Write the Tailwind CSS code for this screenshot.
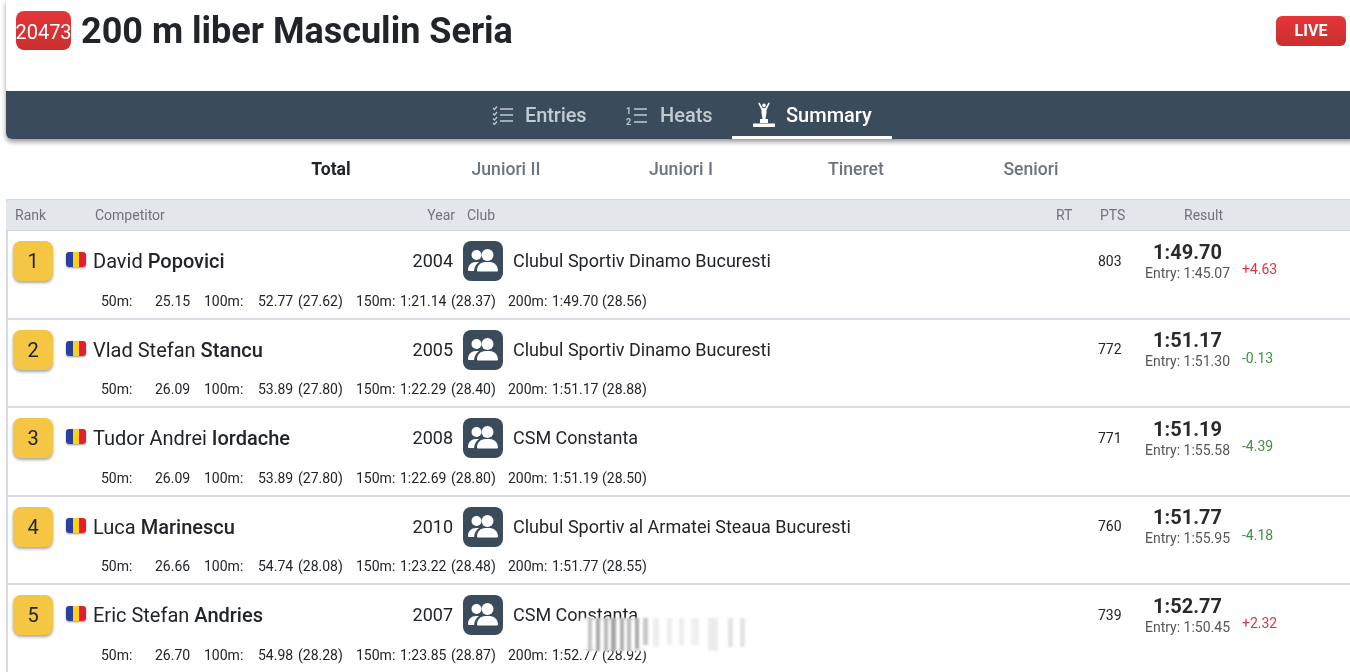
<!DOCTYPE html>
<html lang="ro">
<head>
<meta charset="utf-8">
<title>200 m liber Masculin Seria</title>
<script src="https://cdn.jsdelivr.net/npm/@tailwindcss/browser@4"></script>
</head>
<body class="bg-white overflow-hidden h-[672px] font-['Roboto',sans-serif] text-[#212529]">
<div class="relative w-[1350px] ml-[6px] h-[672px]">
  <!-- event card -->
  <header class="h-[139px] rounded-b-md shadow-[0_3px_5px_rgba(0,0,0,0.4),0_0_1px_rgba(0,0,0,0.12)] flex flex-col">
    <div class="h-[91px] flex items-start justify-between pl-[10px] pr-[10px]">
      <div class="flex items-start mt-[11px]">
        <span class="w-[55px] h-[39px] pt-[1px] rounded-lg bg-linear-to-b from-[#e53538] to-[#c9302f] text-white text-[20px] leading-[41px] flex justify-center whitespace-nowrap">20473</span>
        <h1 class="ml-[10px] text-[36px] leading-[41px] font-bold text-[#212529] whitespace-nowrap">200 m liber Masculin Seria</h1>
      </div>
      <span class="mt-[16px] w-[70px] h-[30px] rounded-md bg-linear-to-b from-[#e53538] to-[#c9302f] text-white text-[16px] font-bold flex items-center justify-center">LIVE</span>
    </div>
    <nav class="h-[48px] bg-[#3a4b5c] rounded-b-md flex justify-center pl-[2px] text-[20px] font-medium">
      <a class="w-[134px] flex items-center gap-[11px] pl-5 text-[#c3cad1] whitespace-nowrap tracking-[-0.1px]">
        <svg class="w-[22px] h-[20px]" viewBox="0 0 22 20" fill="none" stroke="currentColor"><path d="M1 3l1.5 1.5L5 1.5M1 8.5l1.5 1.5L5 7M1 13.5L2.5 15 5 12M1 18l1.5 1.5L5 16.5" stroke-width="1.2"/><path d="M8 4h13M8 10h13M8 16h13" stroke-width="1.4"/></svg>
        Entries
      </a>
      <a class="w-[126px] flex items-center gap-[12px] pl-5 text-[#c3cad1] whitespace-nowrap">
        <svg class="w-[22px] h-[20px]" viewBox="0 0 22 20" fill="none"><text x="0" y="9" font-size="9" font-weight="700" fill="currentColor" font-family="Roboto">1</text><text x="0" y="19.5" font-size="9" font-weight="700" fill="currentColor" font-family="Roboto">2</text><path d="M8 4h13M8 10h13M8 17h13" stroke="currentColor" stroke-width="1.4"/></svg>
        Heats
      </a>
      <a class="w-[160px] flex items-center gap-[10px] pl-5 text-white border-b-[3px] border-white pt-[3px] whitespace-nowrap">
        <svg class="w-[24px] h-[26px]" viewBox="0 0 24 26" fill="#fff"><path d="M6.2 1.2l1.3-.6L10.6 6h2.8l3.1-5.4 1.3.6L14.5 8v3l-1 6h-3l-1-6V8z"/><circle cx="12" cy="3.4" r="1.8"/><rect x="8" y="17" width="8" height="4"/><rect x="1" y="21.5" width="22" height="3.5"/></svg>
        Summary
      </a>
    </nav>
  </header>

  <!-- age groups -->
  <div class="h-[60px] pl-[237.5px] flex items-center text-[17.6px] font-medium text-[#6c757d]">
    <span class="w-[175px] text-center font-bold text-[#212529]">Total</span>
    <span class="w-[175px] text-center">Juniori II</span>
    <span class="w-[175px] text-center">Juniori I</span>
    <span class="w-[175px] text-center">Tineret</span>
    <span class="w-[175px] text-center">Seniori</span>
  </div>

  <!-- results -->
  <div class="border-l-2 border-[#d9dce3]">
    <div class="h-[32px] -ml-[2px] pl-[2px] rounded-tl bg-[#e3e6eb] border-y border-[#d2d5da] flex items-center text-[14px] text-[#6c757d]">
      <span class="w-[87px] pl-[7px]">Rank</span>
      <span class="w-[320px]">Competitor</span>
      <span class="w-[40px] text-right mr-[12px]">Year</span>
      <span class="w-[589px]">Club</span>
      <span class="w-[44px]">RT</span>
      <span class="w-[84px]">PTS</span>
      <span>Result</span>
    </div>

    <div class="h-[88.5px] pt-[10px] border-b-2 border-[#d9dce3]">
      <div class="flex h-[40px] items-center">
        <span class="ml-[5px] w-[40px] h-[40px] rounded-lg bg-[#f4c644] shadow-[0_2px_3px_rgba(0,0,0,0.35)] flex items-center justify-center text-[20px]">1</span>
        <span class="ml-[13px] -mt-[3px] w-[20px] h-[15px] rounded-[3px] bg-[linear-gradient(90deg,#2b3f9e_33%,#fcd116_33%,#fcd116_66%,#e0202e_66%)] shadow-[0_1px_2px_rgba(0,0,0,0.4)] block"></span>
        <span class="ml-[7px] w-[304px] text-[20px] whitespace-nowrap">David <b class="font-medium">Popovici</b></span>
        <span class="w-[56px] -mt-[1px] text-right text-[18px]">2004</span>
        <span class="ml-[10px] w-[40px] h-[40px] rounded-lg bg-[#3a4b5c] flex items-center justify-center"><svg class="w-[30px] h-[24px]" viewBox="0 0 30 24" fill="#fff"><circle cx="8.5" cy="6" r="5"/><circle cx="19.5" cy="6" r="6"/><path d="M0 21c0-5 3.500-8 8-8h3c-3 2-4.500 5-5 9H1a1 1 0 0 1-1-1zM9 21.500c0-5 4-8.500 8-8.500h5c4 0 8 3.500 8 8.500q0 1-1 1H10q-1 0-1-1z"/></svg></span>
        <span class="ml-[10px] -mt-[1px] w-[585px] text-[18px] whitespace-nowrap">Clubul Sportiv Dinamo Bucuresti</span>
        <span class="w-[46px] text-[14px]">803</span>
        <div class="w-[87px] -mt-[1px] text-center leading-none"><div class="text-[20px] font-bold text-[#2a2a2a]">1:49.70</div><div class="mt-[4px] text-[14px] text-[#555]">Entry: 1:45.07</div></div>
        <span class="ml-[11px] mt-[17px] text-[14px] text-[#dc3545]">+4.63</span>
      </div>
      <div class="mt-[10px] h-[20px] pl-[93px] flex items-center text-[14px] whitespace-pre">
        <span class="w-[54px]">50m:</span><span class="w-[35px]">25.15</span>
        <span class="ml-[14px] w-[54px]">100m:</span><span class="w-[40px]">52.77</span><span class="w-[58px]">(27.62)</span>
        <span class="w-[44px]">150m:</span><span class="w-[51px]">1:21.14</span><span class="w-[57px]">(28.37)</span>
        <span class="w-[44px]">200m:</span><span class="w-[50px]">1:49.70</span><span>(28.56)</span>
      </div>
    </div>

    <div class="h-[88.5px] pt-[10px] border-b-2 border-[#d9dce3]">
      <div class="flex h-[40px] items-center">
        <span class="ml-[5px] w-[40px] h-[40px] rounded-lg bg-[#f4c644] shadow-[0_2px_3px_rgba(0,0,0,0.35)] flex items-center justify-center text-[20px]">2</span>
        <span class="ml-[13px] -mt-[3px] w-[20px] h-[15px] rounded-[3px] bg-[linear-gradient(90deg,#2b3f9e_33%,#fcd116_33%,#fcd116_66%,#e0202e_66%)] shadow-[0_1px_2px_rgba(0,0,0,0.4)] block"></span>
        <span class="ml-[7px] w-[304px] text-[20px] whitespace-nowrap">Vlad Stefan <b class="font-medium">Stancu</b></span>
        <span class="w-[56px] -mt-[1px] text-right text-[18px]">2005</span>
        <span class="ml-[10px] w-[40px] h-[40px] rounded-lg bg-[#3a4b5c] flex items-center justify-center"><svg class="w-[30px] h-[24px]" viewBox="0 0 30 24" fill="#fff"><circle cx="8.5" cy="6" r="5"/><circle cx="19.5" cy="6" r="6"/><path d="M0 21c0-5 3.500-8 8-8h3c-3 2-4.500 5-5 9H1a1 1 0 0 1-1-1zM9 21.500c0-5 4-8.500 8-8.500h5c4 0 8 3.500 8 8.500q0 1-1 1H10q-1 0-1-1z"/></svg></span>
        <span class="ml-[10px] -mt-[1px] w-[585px] text-[18px] whitespace-nowrap">Clubul Sportiv Dinamo Bucuresti</span>
        <span class="w-[46px] text-[14px]">772</span>
        <div class="w-[87px] -mt-[1px] text-center leading-none"><div class="text-[20px] font-bold text-[#2a2a2a]">1:51.17</div><div class="mt-[4px] text-[14px] text-[#555]">Entry: 1:51.30</div></div>
        <span class="ml-[11px] mt-[17px] text-[14px] text-[#3f9142]">-0.13</span>
      </div>
      <div class="mt-[10px] h-[20px] pl-[93px] flex items-center text-[14px] whitespace-pre">
        <span class="w-[54px]">50m:</span><span class="w-[35px]">26.09</span>
        <span class="ml-[14px] w-[54px]">100m:</span><span class="w-[40px]">53.89</span><span class="w-[58px]">(27.80)</span>
        <span class="w-[44px]">150m:</span><span class="w-[51px]">1:22.29</span><span class="w-[57px]">(28.40)</span>
        <span class="w-[44px]">200m:</span><span class="w-[50px]">1:51.17</span><span>(28.88)</span>
      </div>
    </div>

    <div class="h-[88.5px] pt-[10px] border-b-2 border-[#d9dce3]">
      <div class="flex h-[40px] items-center">
        <span class="ml-[5px] w-[40px] h-[40px] rounded-lg bg-[#f4c644] shadow-[0_2px_3px_rgba(0,0,0,0.35)] flex items-center justify-center text-[20px]">3</span>
        <span class="ml-[13px] -mt-[3px] w-[20px] h-[15px] rounded-[3px] bg-[linear-gradient(90deg,#2b3f9e_33%,#fcd116_33%,#fcd116_66%,#e0202e_66%)] shadow-[0_1px_2px_rgba(0,0,0,0.4)] block"></span>
        <span class="ml-[7px] w-[304px] text-[20px] whitespace-nowrap">Tudor Andrei <b class="font-medium">Iordache</b></span>
        <span class="w-[56px] -mt-[1px] text-right text-[18px]">2008</span>
        <span class="ml-[10px] w-[40px] h-[40px] rounded-lg bg-[#3a4b5c] flex items-center justify-center"><svg class="w-[30px] h-[24px]" viewBox="0 0 30 24" fill="#fff"><circle cx="8.5" cy="6" r="5"/><circle cx="19.5" cy="6" r="6"/><path d="M0 21c0-5 3.500-8 8-8h3c-3 2-4.500 5-5 9H1a1 1 0 0 1-1-1zM9 21.500c0-5 4-8.500 8-8.500h5c4 0 8 3.500 8 8.500q0 1-1 1H10q-1 0-1-1z"/></svg></span>
        <span class="ml-[10px] -mt-[1px] w-[585px] text-[18px] whitespace-nowrap">CSM Constanta</span>
        <span class="w-[46px] text-[14px]">771</span>
        <div class="w-[87px] -mt-[1px] text-center leading-none"><div class="text-[20px] font-bold text-[#2a2a2a]">1:51.19</div><div class="mt-[4px] text-[14px] text-[#555]">Entry: 1:55.58</div></div>
        <span class="ml-[11px] mt-[17px] text-[14px] text-[#3f9142]">-4.39</span>
      </div>
      <div class="mt-[10px] h-[20px] pl-[93px] flex items-center text-[14px] whitespace-pre">
        <span class="w-[54px]">50m:</span><span class="w-[35px]">26.09</span>
        <span class="ml-[14px] w-[54px]">100m:</span><span class="w-[40px]">53.89</span><span class="w-[58px]">(27.80)</span>
        <span class="w-[44px]">150m:</span><span class="w-[51px]">1:22.69</span><span class="w-[57px]">(28.80)</span>
        <span class="w-[44px]">200m:</span><span class="w-[50px]">1:51.19</span><span>(28.50)</span>
      </div>
    </div>

    <div class="h-[88.5px] pt-[10px] border-b-2 border-[#d9dce3]">
      <div class="flex h-[40px] items-center">
        <span class="ml-[5px] w-[40px] h-[40px] rounded-lg bg-[#f4c644] shadow-[0_2px_3px_rgba(0,0,0,0.35)] flex items-center justify-center text-[20px]">4</span>
        <span class="ml-[13px] -mt-[3px] w-[20px] h-[15px] rounded-[3px] bg-[linear-gradient(90deg,#2b3f9e_33%,#fcd116_33%,#fcd116_66%,#e0202e_66%)] shadow-[0_1px_2px_rgba(0,0,0,0.4)] block"></span>
        <span class="ml-[7px] w-[304px] text-[20px] whitespace-nowrap">Luca <b class="font-medium">Marinescu</b></span>
        <span class="w-[56px] -mt-[1px] text-right text-[18px]">2010</span>
        <span class="ml-[10px] w-[40px] h-[40px] rounded-lg bg-[#3a4b5c] flex items-center justify-center"><svg class="w-[30px] h-[24px]" viewBox="0 0 30 24" fill="#fff"><circle cx="8.5" cy="6" r="5"/><circle cx="19.5" cy="6" r="6"/><path d="M0 21c0-5 3.500-8 8-8h3c-3 2-4.500 5-5 9H1a1 1 0 0 1-1-1zM9 21.500c0-5 4-8.500 8-8.500h5c4 0 8 3.500 8 8.500q0 1-1 1H10q-1 0-1-1z"/></svg></span>
        <span class="ml-[10px] -mt-[1px] w-[585px] text-[18px] whitespace-nowrap">Clubul Sportiv al Armatei Steaua Bucuresti</span>
        <span class="w-[46px] text-[14px]">760</span>
        <div class="w-[87px] -mt-[1px] text-center leading-none"><div class="text-[20px] font-bold text-[#2a2a2a]">1:51.77</div><div class="mt-[4px] text-[14px] text-[#555]">Entry: 1:55.95</div></div>
        <span class="ml-[11px] mt-[17px] text-[14px] text-[#3f9142]">-4.18</span>
      </div>
      <div class="mt-[10px] h-[20px] pl-[93px] flex items-center text-[14px] whitespace-pre">
        <span class="w-[54px]">50m:</span><span class="w-[35px]">26.66</span>
        <span class="ml-[14px] w-[54px]">100m:</span><span class="w-[40px]">54.74</span><span class="w-[58px]">(28.08)</span>
        <span class="w-[44px]">150m:</span><span class="w-[51px]">1:23.22</span><span class="w-[57px]">(28.48)</span>
        <span class="w-[44px]">200m:</span><span class="w-[50px]">1:51.77</span><span>(28.55)</span>
      </div>
    </div>

    <div class="h-[88.5px] pt-[10px]">
      <div class="flex h-[40px] items-center">
        <span class="ml-[5px] w-[40px] h-[40px] rounded-lg bg-[#f4c644] shadow-[0_2px_3px_rgba(0,0,0,0.35)] flex items-center justify-center text-[20px]">5</span>
        <span class="ml-[13px] -mt-[3px] w-[20px] h-[15px] rounded-[3px] bg-[linear-gradient(90deg,#2b3f9e_33%,#fcd116_33%,#fcd116_66%,#e0202e_66%)] shadow-[0_1px_2px_rgba(0,0,0,0.4)] block"></span>
        <span class="ml-[7px] w-[304px] text-[20px] whitespace-nowrap">Eric Stefan <b class="font-medium">Andries</b></span>
        <span class="w-[56px] -mt-[1px] text-right text-[18px]">2007</span>
        <span class="ml-[10px] w-[40px] h-[40px] rounded-lg bg-[#3a4b5c] flex items-center justify-center"><svg class="w-[30px] h-[24px]" viewBox="0 0 30 24" fill="#fff"><circle cx="8.5" cy="6" r="5"/><circle cx="19.5" cy="6" r="6"/><path d="M0 21c0-5 3.500-8 8-8h3c-3 2-4.500 5-5 9H1a1 1 0 0 1-1-1zM9 21.500c0-5 4-8.500 8-8.500h5c4 0 8 3.500 8 8.500q0 1-1 1H10q-1 0-1-1z"/></svg></span>
        <span class="ml-[10px] -mt-[1px] w-[585px] text-[18px] whitespace-nowrap">CSM Constanta</span>
        <span class="w-[46px] text-[14px]">739</span>
        <div class="w-[87px] -mt-[1px] text-center leading-none"><div class="text-[20px] font-bold text-[#2a2a2a]">1:52.77</div><div class="mt-[4px] text-[14px] text-[#555]">Entry: 1:50.45</div></div>
        <span class="ml-[11px] mt-[17px] text-[14px] text-[#dc3545]">+2.32</span>
      </div>
      <div class="mt-[10px] h-[20px] pl-[93px] flex items-center text-[14px] whitespace-pre">
        <span class="w-[54px]">50m:</span><span class="w-[35px]">26.70</span>
        <span class="ml-[14px] w-[54px]">100m:</span><span class="w-[40px]">54.98</span><span class="w-[58px]">(28.28)</span>
        <span class="w-[44px]">150m:</span><span class="w-[51px]">1:23.85</span><span class="w-[57px]">(28.87)</span>
        <span class="w-[44px]">200m:</span><span class="w-[50px]">1:52.77</span><span>(28.92)</span>
      </div>
    </div>
  </div>

  <!-- blurred smudge lying over the last row -->
  <div class="absolute left-[574px] top-[618px] w-[196px] h-[33px] bg-white/80 backdrop-blur-[3px] blur-[1px] flex items-stretch pl-[5px]">
    <span class="w-[4px] ml-[3px] bg-[#c4c4c4]"></span><span class="w-[4px] ml-[4px] bg-[#aaa]"></span><span class="w-[4px] ml-[4px] bg-[#b8b8b8]"></span><span class="w-[5px] ml-[3px] bg-[#a5a5a5]"></span><span class="w-[4px] ml-[4px] bg-[#b0b0b0]"></span><span class="w-[4px] ml-[3px] bg-[#bbb]"></span><span class="w-[4px] ml-[4px] bg-[#aaa] mb-[2px]"></span><span class="w-[5px] ml-[4px] bg-[#c8c8c8] mb-[6px]"></span>
    <span class="w-[6px] ml-[5px] bg-[#eee] mb-[4px]"></span><span class="w-[5px] ml-[8px] bg-[#eee] mb-[6px]"></span><span class="w-[5px] ml-[7px] bg-[#eee] mb-[6px]"></span><span class="w-[8px] ml-[7px] bg-[#f0f0f0] mb-[6px]"></span><span class="w-[10px] ml-[9px] bg-[#ececec]"></span><span class="w-[5px] ml-[10px] bg-[#e4e4e4] mb-[4px]"></span><span class="w-[5px] ml-[7px] bg-[#e4e4e4] mb-[4px]"></span>
  </div>
</div>
</body>
</html>
